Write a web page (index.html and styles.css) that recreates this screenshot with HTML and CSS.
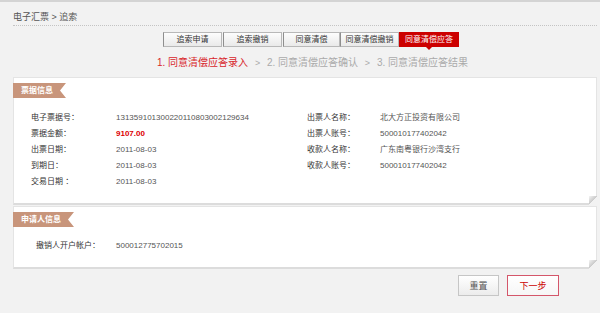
FILE: index.html
```html
<!DOCTYPE html>
<html lang="zh-CN">

<head>
    <meta charset="UTF-8">
    <title>电子汇票 - 追索</title>
    <link rel="stylesheet" href="styles.css">
</head>

<body>
    <div class="crumb">电子汇票 &gt; 追索</div>

    <div class="tabs">
        <a class="tab" href="#">追索申请</a>
        <a class="tab" href="#">追索撤销</a>
        <a class="tab tab-narrow" href="#">同意清偿</a>
        <a class="tab tab-tight" href="#">同意清偿撤销</a>
        <a class="tab active" href="#">同意清偿应答</a>
    </div>

    <div class="steps">
        <span class="on">1. 同意清偿应答录入</span>
        <span class="sep">&gt;</span>
        <span>2. 同意清偿应答确认</span>
        <span class="sep">&gt;</span>
        <span>3. 同意清偿应答结果</span>
    </div>

    <div class="card">
        <div class="badge">票据信息</div>
        <div class="info">
            <div class="col">
                <div class="row"><span class="label">电子票据号：</span><span class="value">131359101300220110803002129634</span></div>
                <div class="row"><span class="label">票据金额：</span><span class="value amount">9107.00</span></div>
                <div class="row"><span class="label">出票日期：</span><span class="value">2011-08-03</span></div>
                <div class="row"><span class="label">到期日：</span><span class="value">2011-08-03</span></div>
                <div class="row"><span class="label">交易日期 ：</span><span class="value">2011-08-03</span></div>
            </div>
            <div class="col col-right">
                <div class="row"><span class="label">出票人名称：</span><span class="value">北大方正投资有限公司</span></div>
                <div class="row"><span class="label">出票人账号：</span><span class="value">500010177402042</span></div>
                <div class="row"><span class="label">收款人名称：</span><span class="value">广东南粤银行沙湾支行</span></div>
                <div class="row"><span class="label">收款人账号：</span><span class="value">500010177402042</span></div>
            </div>
        </div>
    </div>

    <div class="card card-small">
        <div class="badge">申请人信息</div>
        <div class="info">
            <div class="col">
                <div class="row"><span class="label label-indent">撤销人开户帐户：</span><span class="value">500012775702015</span></div>
            </div>
        </div>
    </div>

    <div class="actions">
        <button class="btn">重置</button>
        <button class="btn btn-next">下一步</button>
    </div>
</body>

</html>
```

FILE: styles.css
```css
body {
    font-family: "Liberation Sans", "Noto Sans CJK SC", sans-serif;
    margin: 0;
    padding: 0;
    background: #f2f2f2;
    border-top: 2px solid #d4d4d4;
    color: #333;
    font-size: 8px;
}

.crumb {
    margin: 0 3px 0 13px;
    padding: 9px 0 2px;
    line-height: 12px;
    font-size: 9px;
    color: #555;
    border-bottom: 1px dotted #c4c4c4;
}

.tabs {
    display: flex;
    margin-top: 6px;
    padding-left: 163px;
}

.tab {
    position: relative;
    width: 57px;
    margin-right: 1px;
    height: 13px;
    line-height: 13px;
    border: 1px solid #b8b8b8;
    border-left-color: #8e8e8e;
    background: linear-gradient(#fdfdfd, #e9e9e9);
    color: #333;
    text-decoration: none;
    text-align: center;
    font-size: 8px;
}

.tab-narrow {
    width: 55px;
    margin-right: 0;
}

.tab-tight {
    margin-right: 0;
}

.tab.active {
    width: 58px;
    background: #cc0000;
    border-color: #cc0000;
    color: white;
}

.tab.active::after {
    content: "";
    position: absolute;
    left: 50%;
    bottom: -4px;
    margin-left: -3px;
    border-left: 3px solid transparent;
    border-right: 3px solid transparent;
    border-top: 3px solid #cc0000;
}

.steps {
    margin-top: 9px;
    padding-left: 157px;
    line-height: 14px;
    font-size: 10px;
    color: #aaa;
}

.steps .on {
    color: #d8262b;
}

.steps .sep {
    margin: 0 4px;
    font-size: 9px;
}

.card {
    position: relative;
    margin: 7px 3px 0 13px;
    background: white;
    border: 1px solid #e4e4e4;
    border-bottom: 2px solid #dcdcdc;
    padding: 5px 0 13px;
}

.card::after {
    content: "";
    position: absolute;
    right: -2px;
    bottom: -2px;
    width: 9px;
    height: 9px;
    background: linear-gradient(to top left, #f2f2f2 50%, #c9c9c9 52%, #f4f4f4 100%);
}

.card-small {
    margin-top: 1px;
    padding-bottom: 13px;
}

.badge {
    display: inline-block;
    margin-left: -1px;
    height: 15px;
    line-height: 15px;
    padding: 0 13px 0 8px;
    background: #c8957b;
    color: white;
    font-weight: bold;
    font-size: 8px;
    clip-path: polygon(0 0, 100% 0, calc(100% - 6px) 50%, 100% 100%, 0 100%);
}

.info {
    display: flex;
    margin-top: 12px;
}

.card-small .info {
    margin-top: 11px;
}

.col {
    width: 276px;
    padding-left: 17px;
}

.col-right {
    padding-left: 0;
}

.row {
    display: flex;
    height: 16px;
    line-height: 16px;
}

.label {
    width: 85px;
    color: #333;
}

.col-right .label {
    width: 73px;
}

.label-indent {
    padding-left: 5px;
    width: 80px;
}

.value {
    color: #555;
}

.value.amount {
    color: #dd0000;
    font-weight: bold;
}

.actions {
    display: flex;
    justify-content: flex-end;
    gap: 8px;
    margin: 6px 41px 0 0;
}

.btn {
    width: 41px;
    height: 21px;
    padding: 0;
    border: 1px solid #c6c6c6;
    background: linear-gradient(#ffffff, #ececec);
    color: #555;
    font-family: inherit;
    font-size: 9px;
    cursor: pointer;
}

.btn-next {
    width: 52px;
    border-color: #d4566a;
    background: linear-gradient(#ffffff, #f6f6f6);
    color: #cc0000;
}
```
